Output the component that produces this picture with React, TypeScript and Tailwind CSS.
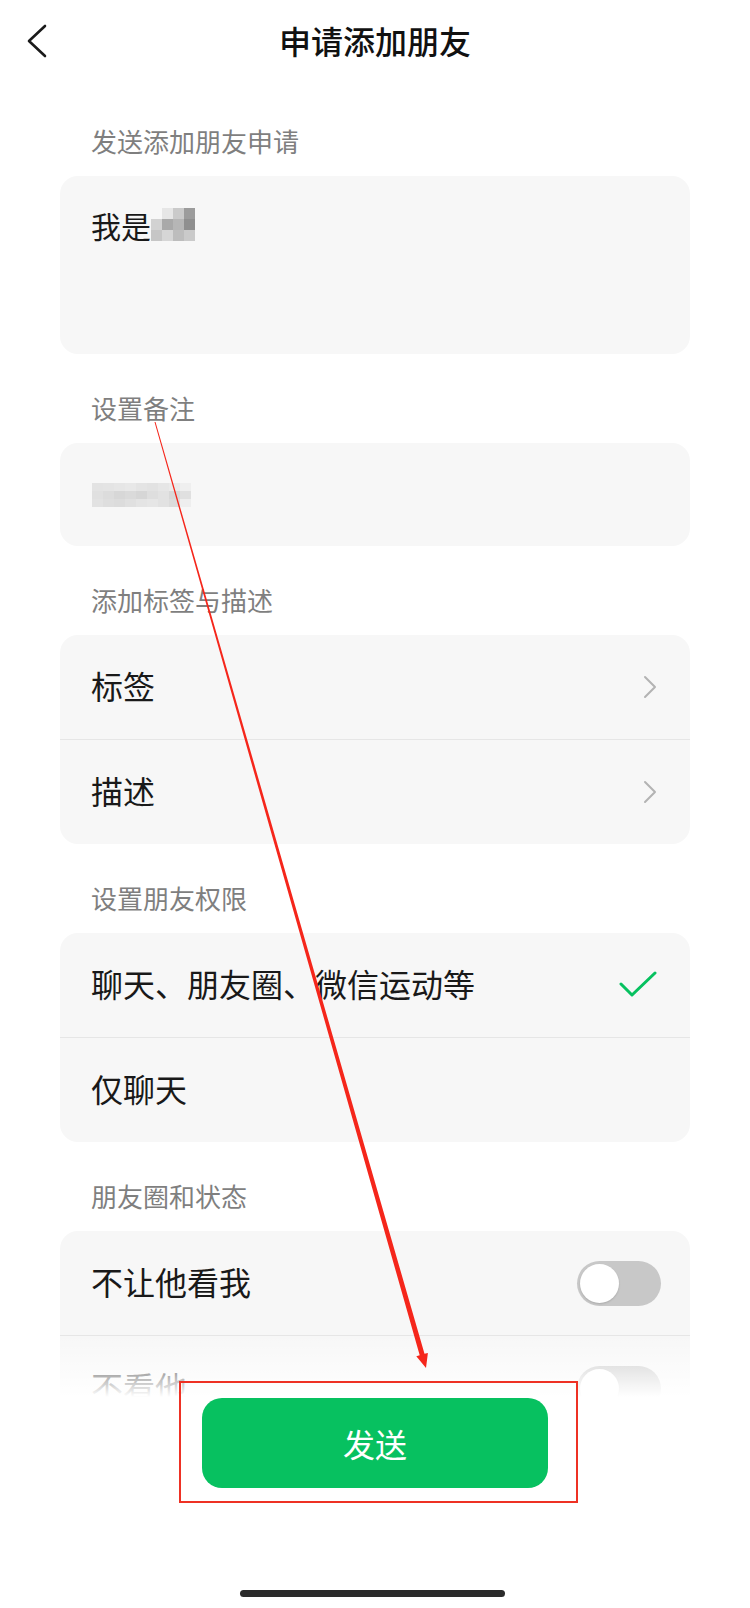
import React from "react";

const font = "font-['Noto_Sans_CJK_SC','Noto_Sans',sans-serif]";

function Mosaic({ rows, cw, ch }: { rows: string[][]; cw: number; ch: number }) {
  return (
    <div className="flex flex-col">
      {rows.map((r, i) => (
        <div key={i} className="flex">
          {r.map((c, j) => (
            <div key={j} style={{ width: cw, height: ch, background: c }} />
          ))}
        </div>
      ))}
    </div>
  );
}

function ChevronRight() {
  return (
    <svg width="14" height="24" viewBox="0 0 14 24" fill="none">
      <polyline points="2,2 12,12 2,22" stroke="#b3b3b3" strokeWidth="2" strokeLinecap="round" strokeLinejoin="round" />
    </svg>
  );
}

function Check() {
  return (
    <svg width="38" height="28" viewBox="0 0 38 28" fill="none">
      <polyline points="2,13 13,24 36,2" stroke="#07c160" strokeWidth="3" strokeLinecap="round" strokeLinejoin="round" />
    </svg>
  );
}

function Toggle() {
  return (
    <div className="w-[84px] h-[45px] rounded-full bg-[#c8c8c8] flex items-center pl-[3px]">
      <div className="w-[39px] h-[39px] rounded-full bg-white shadow-[0_1px_2px_rgba(0,0,0,0.15)]" />
    </div>
  );
}

function Label({ text, first }: { text: string; first?: boolean }) {
  return (
    <div
      className={`${first ? "mt-[46px]" : "mt-[41px]"} mb-[22px] pl-[31px] h-[26px] text-[26px] leading-[26px] text-[#7f7f7f]`}
    >
      {text}
    </div>
  );
}

function Row({ text, right, sep, pr }: { text: string; right?: React.ReactNode; sep?: boolean; pr: string }) {
  return (
    <div className={`${sep ? "border-t border-[#e6e6e6]" : ""}`}>
      <div className={`h-[104px] flex items-center justify-between pl-[31px] ${pr}`}>
        <span className="text-[32px] leading-[32px] text-[#191919] -translate-y-[2px]">{text}</span>
        {right}
      </div>
    </div>
  );
}

export default function App() {
  const m1 = [
    ["transparent", "#e6e6e6", "#cacaca", "#9c9c9c"],
    ["#d2d2d2", "#a9a9a9", "#b6b6b6", "#8f8f8f"],
    ["#c6c6c6", "#d6d6d6", "#bdbdbd", "#cacaca"],
  ];
  const m2 = [
    ["#e3e3e3", "#e4e4e4", "#e6e6e6", "#e8e8e8", "#e4e4e4", "#e2e2e2", "#e6e6e6", "#eaeaea", "#efefef"],
    ["#e0e0e0", "#dcdcdc", "#d7d7d7", "#dadada", "#d6d6d6", "#dedede", "#e2e2e2", "#d8d8d8", "#e0e0e0"],
    ["#e2e2e2", "#dedede", "#dcdcdc", "#e0e0e0", "#e4e4e4", "#e6e6e6", "#e2e2e2", "#dcdcdc", "#eeeeee"],
  ];
  return (
    <div className={`relative w-[750px] h-[1608px] overflow-hidden bg-white ${font}`}>
      {/* header */}
      <div className="grid grid-cols-[90px_1fr_90px] h-[82px] items-center">
        <div className="pl-[26px] flex items-center">
          <svg width="22" height="34" viewBox="0 0 22 34" fill="none">
            <polyline points="19,2 3,17 19,32" stroke="#1a1a1a" strokeWidth="2.6" strokeLinecap="round" strokeLinejoin="round" />
          </svg>
        </div>
        <div className="text-center text-[32px] leading-[32px] font-medium text-[#111111] -translate-y-[1px]">申请添加朋友</div>
        <div />
      </div>

      <div className="px-[60px]">
        <Label text="发送添加朋友申请" first />
        <div className="h-[178px] rounded-[18px] bg-[#f7f7f7] pl-[31px] pt-[32px]">
          <div className="flex items-center">
            <span className="text-[30px] leading-[30px] text-[#191919]">我是</span>
            <Mosaic rows={m1} cw={11} ch={11} />
          </div>
        </div>

        <Label text="设置备注" />
        <div className="h-[103px] rounded-[18px] bg-[#f7f7f7] pl-[32px] flex items-center">
          <Mosaic rows={m2} cw={11} ch={8} />
        </div>

        <Label text="添加标签与描述" />
        <div className="rounded-[18px] bg-[#f7f7f7] overflow-hidden">
          <Row text="标签" right={<ChevronRight />} pr="pr-[33px]" />
          <Row text="描述" right={<ChevronRight />} sep pr="pr-[33px]" />
        </div>

        <Label text="设置朋友权限" />
        <div className="rounded-[18px] bg-[#f7f7f7] overflow-hidden">
          <Row text="聊天、朋友圈、微信运动等" right={<Check />} pr="pr-[33px]" />
          <Row text="仅聊天" sep pr="pr-[33px]" />
        </div>

        <Label text="朋友圈和状态" />
        <div className="rounded-[18px] bg-[#f7f7f7] overflow-hidden">
          <Row text="不让他看我" right={<Toggle />} pr="pr-[29px]" />
          <Row text="不看他" right={<Toggle />} sep pr="pr-[29px]" />
        </div>
      </div>

      {/* bottom bar overlay */}
      <div className="absolute left-0 right-0 bottom-0 h-[273px] bg-[linear-gradient(to_bottom,rgba(255,255,255,0)_0px,#ffffff_62px)] flex flex-col">
        <div className="mt-[46px] ml-[179px] w-[399px] h-[122px] border-2 border-[#ee3124] pl-[21px] pt-[15px]">
          <div className="w-[346px] h-[90px] rounded-[20px] bg-[#07c160] flex items-center justify-center text-[32px] leading-[32px] text-white">
            发送
          </div>
        </div>
        <div className="mt-[87px] ml-[240px] w-[265px] h-[7px] rounded-full bg-[#2b2b2b]" />
      </div>

      {/* annotation arrow */}
      <svg className="absolute left-0 top-0 pointer-events-none" width="750" height="1608" viewBox="0 0 750 1608">
        <polygon
          points="155.5,421.9 424.5,1353.8 427.9,1352.9 426,1368 416.3,1356.2 419.7,1355.2 154.5,422.1"
          fill="#f5261b"
        />
      </svg>
    </div>
  );
}
